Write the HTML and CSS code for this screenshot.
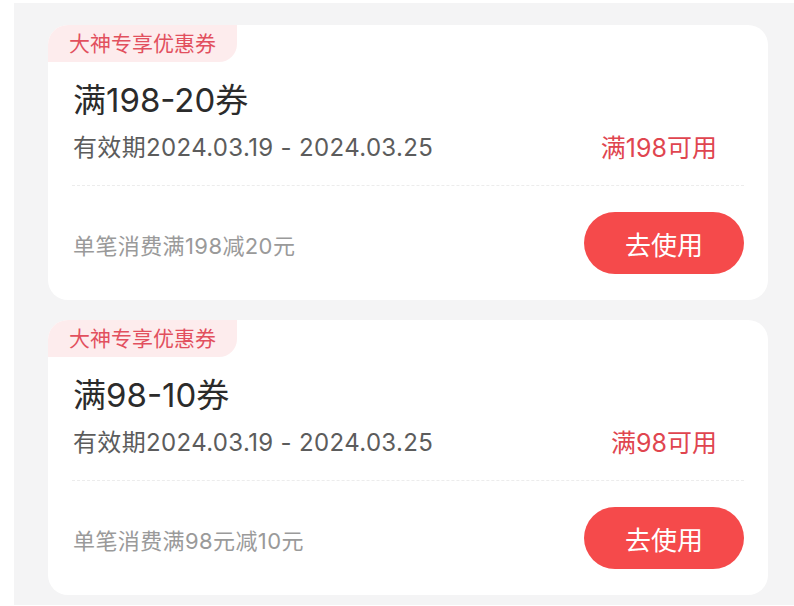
FILE: index.html
```html
<!DOCTYPE html>
<html lang="zh-CN">
<head>
    <meta charset="UTF-8">
    <meta name="viewport" content="width=device-width, initial-scale=1.0">
    <title>优惠券</title>
    <link rel="stylesheet" href="styles.css">
</head>
<body>
    <div class="coupon-list">
        <div class="coupon">
            <div class="coupon-tag">大神专享优惠券</div>
            <div class="coupon-main">
                <div class="coupon-title">满198-20券</div>
                <div class="coupon-info">
                    <span class="coupon-date">有效期2024.03.19 - 2024.03.25</span>
                    <span class="coupon-limit">满198可用</span>
                </div>
            </div>
            <div class="coupon-divider"></div>
            <div class="coupon-footer">
                <span class="coupon-desc">单笔消费满198减20元</span>
                <button class="use-button">去使用</button>
            </div>
        </div>

        <div class="coupon">
            <div class="coupon-tag">大神专享优惠券</div>
            <div class="coupon-main">
                <div class="coupon-title">满98-10券</div>
                <div class="coupon-info">
                    <span class="coupon-date">有效期2024.03.19 - 2024.03.25</span>
                    <span class="coupon-limit">满98可用</span>
                </div>
            </div>
            <div class="coupon-divider"></div>
            <div class="coupon-footer">
                <span class="coupon-desc">单笔消费满98元减10元</span>
                <button class="use-button">去使用</button>
            </div>
        </div>
    </div>
</body>
</html>
```

FILE: styles.css
```css
* {
    margin: 0;
    padding: 0;
    box-sizing: border-box;
}

body {
    font-family: Inter, "Noto Sans CJK SC", sans-serif;
    background-color: #ffffff;
    color: #333333;
}

.coupon-list {
    margin: 3px 0 0 14px;
    background: #f4f4f5;
    padding: 22px 26px 10px 34px;
    display: flex;
    flex-direction: column;
    gap: 20px;
}

.coupon {
    background: #ffffff;
    border-radius: 20px;
    overflow: hidden;
}

.coupon-tag {
    display: inline-block;
    height: 37px;
    line-height: 37px;
    padding: 0 21px 0 21px;
    background: #fdeced;
    color: #e2505e;
    font-size: 21px;
    border-bottom-right-radius: 18px;
}

.coupon-main {
    padding: 19px 24px 0 25px;
}

.coupon-title {
    font-size: 33px;
    line-height: 38px;
    color: #2b2b2b;
}

.coupon-info {
    display: flex;
    justify-content: space-between;
    align-items: center;
    margin-top: 13px;
    padding-right: 27px;
}

.coupon-date {
    font-size: 24px;
    line-height: 32px;
    letter-spacing: 0.35px;
    color: #5c5c5c;
}

.coupon-limit {
    font-size: 25px;
    line-height: 32px;
    color: #e0454f;
}

.coupon-divider {
    margin: 21px 24px 0 24px;
    border-top: 1px dashed #ececec;
}

.coupon-footer {
    display: flex;
    justify-content: space-between;
    align-items: center;
    padding: 26px 24px 26px 25px;
}

.coupon-desc {
    font-size: 22px;
    letter-spacing: 0.4px;
    color: #9a9a9a;
    margin-top: 2px;
}

.use-button {
    width: 160px;
    height: 62px;
    border: none;
    border-radius: 31px;
    background: #f54a4b;
    color: #ffffff;
    font-family: inherit;
    font-size: 26px;
    cursor: pointer;
}
```
